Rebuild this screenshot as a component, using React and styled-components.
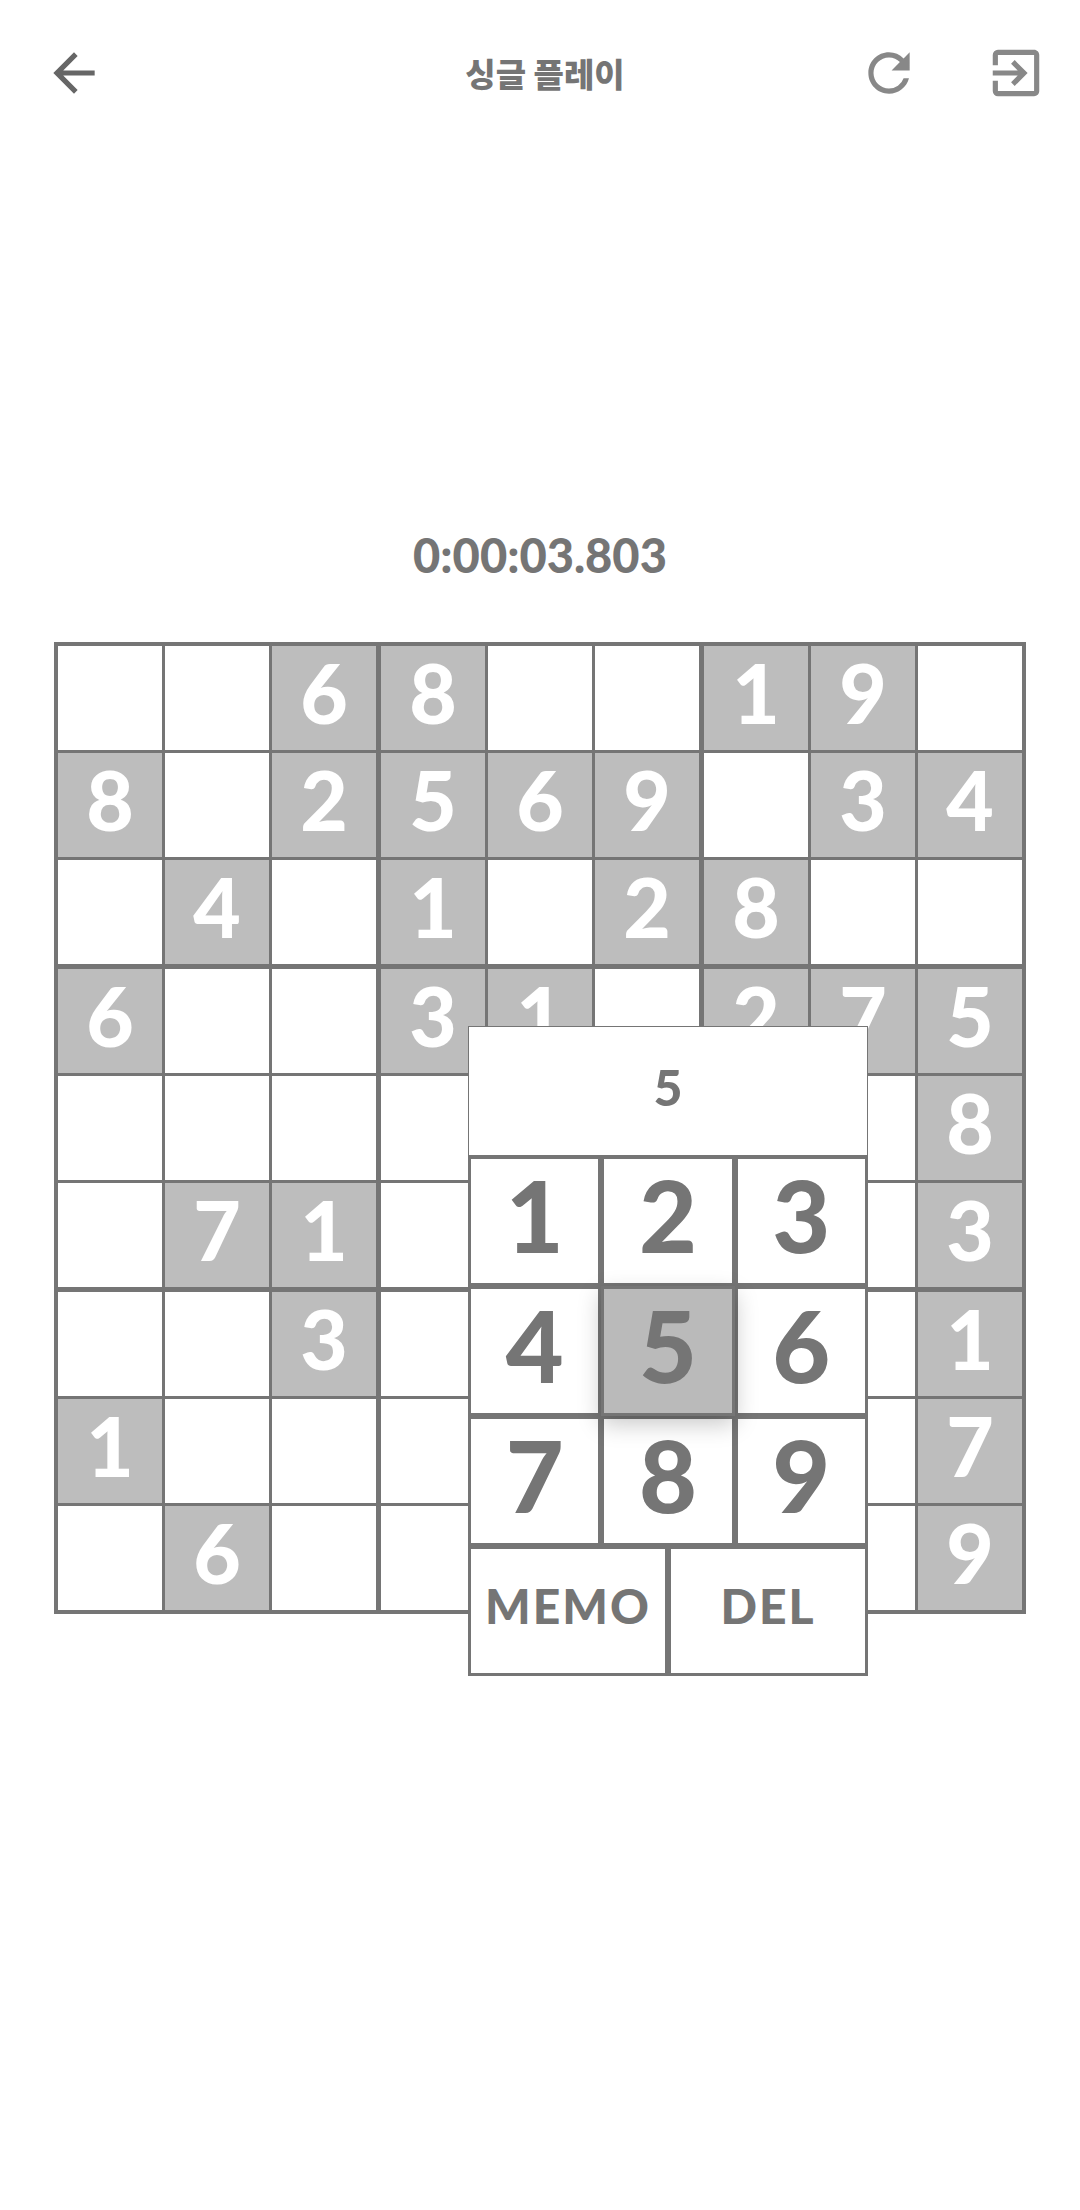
import React from "react";
import styled, { createGlobalStyle } from "styled-components";
import { MdArrowBack, MdRefresh, MdExitToApp } from "react-icons/md";

const FONT = `Lato, "Noto Sans CJK KR", sans-serif`;
const LINE = "#757575";
const FILLED = "#bdbdbd";

const GlobalStyle = createGlobalStyle`
	html, body {
		margin: 0;
		padding: 0;
		background: #fff;
		font-family: ${FONT};
	}
`;

const Page = styled.div`
	width: 1080px;
	min-height: 2210px;
	background: #fff;
`;

const Header = styled.header`
	display: grid;
	grid-template-columns: 1fr auto 1fr;
	align-items: center;
	height: 146px;
	padding: 0 33px 0 43px;
	box-sizing: border-box;
`;

const HeaderSide = styled.div`
	display: flex;
	justify-content: ${(p) => (p.$end ? "flex-end" : "flex-start")};
	gap: 65px;
`;

const IconButton = styled.button`
	display: flex;
	width: 62px;
	height: 62px;
	padding: 0;
	border: 0;
	background: none;
	color: ${(p) => p.$color};
	font-size: 62px;
`;

const Title = styled.h1`
	margin: 0;
	color: ${LINE};
	font-family: "Noto Sans CJK KR", sans-serif;
	font-size: 33px;
	font-weight: 900;
`;

const Timer = styled.div`
	padding: 379px 0 57px;
	color: ${LINE};
	font-size: 47px;
	font-weight: 900;
	line-height: 60px;
	text-align: center;
`;

const Board = styled.div`
	position: relative;
	display: grid;
	grid-template-columns: repeat(3, 318px);
	gap: 5px;
	width: 964px;
	margin: 0 54px;
	padding: 4px;
	background: ${LINE};
`;

const Box = styled.div`
	display: grid;
	grid-template-columns: repeat(3, 104px);
	grid-auto-rows: 104px;
	gap: 3px;
`;

const Cell = styled.div`
	display: flex;
	align-items: center;
	justify-content: center;
	padding-bottom: 12px;
	box-sizing: border-box;
	background: ${(p) => (p.$filled ? FILLED : "#fff")};
	color: #fff;
	font-size: 82px;
	font-weight: 900;
	line-height: 1;
`;

const Keypad = styled.div`
	position: absolute;
	top: 384px;
	left: 414px;
	display: grid;
	grid-template-columns: repeat(6, 1fr);
	grid-auto-rows: 130px;
	width: 400px;
	background: #fff;
`;

const Display = styled.div`
	grid-column: span 6;
	display: flex;
	align-items: center;
	justify-content: center;
	padding-bottom: 8px;
	box-sizing: border-box;
	border: 1px solid ${LINE};
	color: ${LINE};
	font-size: 50px;
	font-weight: 900;
`;

const Key = styled.button`
	grid-column: span ${(p) => (p.$wide ? 3 : 2)};
	position: relative;
	z-index: ${(p) => (p.$active ? 1 : 0)};
	display: flex;
	align-items: center;
	justify-content: center;
	padding: 0 0 ${(p) => (p.$wide ? 10 : 14)}px;
	box-sizing: border-box;
	border: 3px solid ${LINE};
	background: ${(p) => (p.$active ? "#bababa" : "#fff")};
	box-shadow: ${(p) => (p.$active ? "0 8px 22px rgba(0, 0, 0, 0.22)" : "none")};
	color: ${LINE};
	font-family: ${FONT};
	font-size: ${(p) => (p.$wide ? 48 : 100)}px;
	font-weight: 900;
	letter-spacing: ${(p) => (p.$wide ? "2px" : "0")};
	line-height: 1;
`;

const ROWS = [
	"  68  19 ",
	"8 25669 34".replace("669", "69"),
	" 4 1 28  ",
	"6  31 275",
	"        8",
	" 71     3",
	"  3     1",
	"1       7",
	" 6      9",
];

const boxCells = (bx) => {
	const cells = [];
	for (let r = 0; r < 3; r++) {
		for (let c = 0; c < 3; c++) {
			const row = Math.floor(bx / 3) * 3 + r;
			const col = (bx % 3) * 3 + c;
			cells.push(ROWS[row][col].trim());
		}
	}
	return cells;
};

function App() {
	return (
		<Page>
			<GlobalStyle />
			<Header>
				<HeaderSide>
					<IconButton $color="#666666"><MdArrowBack /></IconButton>
				</HeaderSide>
				<Title>싱글 플레이</Title>
				<HeaderSide $end>
					<IconButton $color="#888888"><MdRefresh /></IconButton>
					<IconButton $color="#888888"><MdExitToApp /></IconButton>
				</HeaderSide>
			</Header>
			<Timer>0:00:03.803</Timer>
			<Board>
				{[0, 1, 2, 3, 4, 5, 6, 7, 8].map((bx) => (
					<Box key={bx}>
						{boxCells(bx).map((v, i) => (
							<Cell key={i} $filled={!!v}>{v}</Cell>
						))}
					</Box>
				))}
				<Keypad>
					<Display>5</Display>
					{[1, 2, 3, 4, 5, 6, 7, 8, 9].map((n) => (
						<Key key={n} $active={n === 5}>{n}</Key>
					))}
					<Key $wide>MEMO</Key>
					<Key $wide>DEL</Key>
				</Keypad>
			</Board>
		</Page>
	);
}

export default App;
